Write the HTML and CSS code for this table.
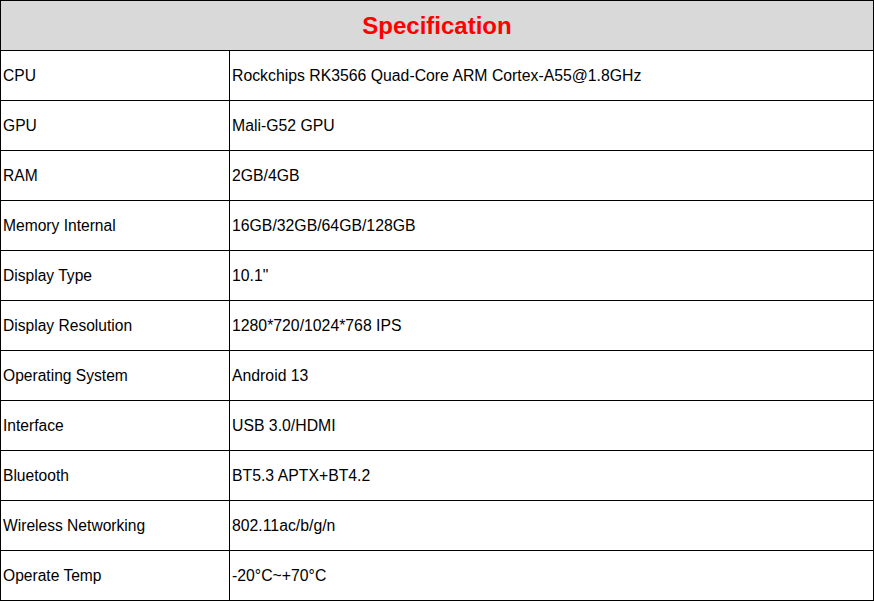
FILE: index.html
```html
<!DOCTYPE html>
<html>
<head>
<meta charset="utf-8">
<link rel="stylesheet" href="styles.css">
</head>
<body>
<div class="spec">
  <div class="head">Specification</div>
  <div class="k">CPU</div><div class="v">Rockchips RK3566 Quad-Core ARM Cortex-A55@1.8GHz</div>
  <div class="k">GPU</div><div class="v">Mali-G52 GPU</div>
  <div class="k">RAM</div><div class="v">2GB/4GB</div>
  <div class="k">Memory Internal</div><div class="v">16GB/32GB/64GB/128GB</div>
  <div class="k">Display Type</div><div class="v">10.1"</div>
  <div class="k">Display Resolution</div><div class="v">1280*720/1024*768 IPS</div>
  <div class="k">Operating System</div><div class="v">Android 13</div>
  <div class="k">Interface</div><div class="v">USB 3.0/HDMI</div>
  <div class="k">Bluetooth</div><div class="v">BT5.3 APTX+BT4.2</div>
  <div class="k">Wireless Networking</div><div class="v">802.11ac/b/g/n</div>
  <div class="k">Operate Temp</div><div class="v">-20°C~+70°C</div>
</div>
</body>
</html>
```
FILE: styles.css
```css
html, body {
  margin: 0;
  padding: 0;
  background: #ffffff;
}
.spec {
  display: grid;
  grid-template-columns: 229px 644px;
  grid-auto-rows: 50px;
  width: 873px;
  border-left: 1px solid #000;
  border-top: 1px solid #000;
  font-family: "Liberation Sans", Arial, sans-serif;
  font-size: 15.6px;
  color: #000;
}
.spec > div {
  box-sizing: border-box;
  border-right: 1px solid #000;
  border-bottom: 1px solid #000;
  display: flex;
  align-items: center;
}
.head {
  grid-column: 1 / 3;
  justify-content: center;
  background: #d9d9d9;
  color: #ff0000;
  font-weight: bold;
  font-size: 24px;
  padding-top: 1px;
}
.k {
  padding: 1px 0 0 2px;
}
.v {
  padding: 1px 0 0 2px;
  font-size: 15.8px;
}
```
